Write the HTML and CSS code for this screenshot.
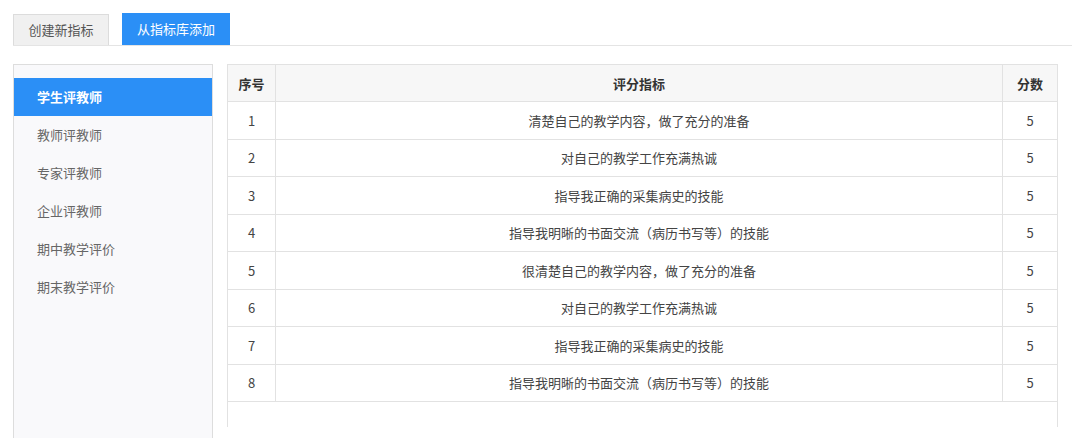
FILE: index.html
```html
<!DOCTYPE html>
<html lang="zh">
<head>
<meta charset="utf-8">
<link rel="stylesheet" href="styles.css">
</head>
<body>
<div class="page">
  <div class="tabs">
    <div class="tab">创建新指标</div>
    <div class="tab active">从指标库添加</div>
  </div>
  <div class="main">
    <div class="sidebar">
      <div class="item active">学生评教师</div>
      <div class="item">教师评教师</div>
      <div class="item">专家评教师</div>
      <div class="item">企业评教师</div>
      <div class="item">期中教学评价</div>
      <div class="item">期末教学评价</div>
    </div>
    <div class="tablewrap">
      <table class="grid">
        <thead>
          <tr><th class="c1">序号</th><th>评分指标</th><th class="c3">分数</th></tr>
        </thead>
        <tbody>
          <tr><td>1</td><td>清楚自己的教学内容，做了充分的准备</td><td>5</td></tr>
          <tr><td>2</td><td>对自己的教学工作充满热诚</td><td>5</td></tr>
          <tr><td>3</td><td>指导我正确的采集病史的技能</td><td>5</td></tr>
          <tr><td>4</td><td>指导我明晰的书面交流（病历书写等）的技能</td><td>5</td></tr>
          <tr><td>5</td><td>很清楚自己的教学内容，做了充分的准备</td><td>5</td></tr>
          <tr><td>6</td><td>对自己的教学工作充满热诚</td><td>5</td></tr>
          <tr><td>7</td><td>指导我正确的采集病史的技能</td><td>5</td></tr>
          <tr><td>8</td><td>指导我明晰的书面交流（病历书写等）的技能</td><td>5</td></tr>
        </tbody>
      </table>
    </div>
  </div>
</div>
</body>
</html>
```

FILE: styles.css
```css
html, body {
  margin: 0;
  padding: 0;
  background: #ffffff;
  font-family: "Noto Sans CJK SC", "Noto Sans", sans-serif;
  font-size: 13px;
  color: #333;
  overflow: hidden;
  height: 440px;
}
.page {
  padding: 13px 8px 0 13px;
}
.tabs {
  display: flex;
  align-items: flex-end;
  gap: 13px;
  height: 32px;
  border-bottom: 1px solid #e4e4e4;
}
.tab {
  width: 94px;
  height: 30px;
  line-height: 30px;
  text-align: center;
  background: #f0f0f0;
  border: 1px solid #dcdcdc;
  border-bottom: none;
  color: #555;
  font-size: 13px;
}
.tab.active {
  width: 108px;
  height: 32px;
  line-height: 32px;
  border: none;
  background: #2b8ff6;
  color: #ffffff;
}
.main {
  display: flex;
  gap: 14px;
  margin-top: 18px;
}
.sidebar {
  width: 198px;
  height: 360px;
  border: 1px solid #dddddd;
  border-bottom: none;
  background: #f9f9fb;
  padding-top: 13px;
}
.item {
  height: 38px;
  line-height: 38px;
  padding-left: 23px;
  color: #666;
  font-size: 13px;
}
.item.active {
  background: #2b8ff6;
  color: #ffffff;
  font-weight: bold;
}
.tablewrap {
  width: 829px;
  height: 362px;
  border: 1px solid #e2e2e2;
  border-bottom: none;
}
.grid {
  width: 100%;
  border-collapse: collapse;
  table-layout: fixed;
}
.grid th, .grid td {
  text-align: center;
  border-bottom: 1px solid #e2e2e2;
  border-left: 1px solid #e2e2e2;
  padding: 0;
  font-size: 13px;
  color: #444;
}
.grid th:first-child, .grid td:first-child {
  border-left: none;
}
.grid th {
  height: 36px;
  background: #f7f7f7;
  font-weight: bold;
  color: #333;
}
.grid td {
  height: 36.5px;
}
.c1 { width: 47px; }
.c3 { width: 54px; }
```
